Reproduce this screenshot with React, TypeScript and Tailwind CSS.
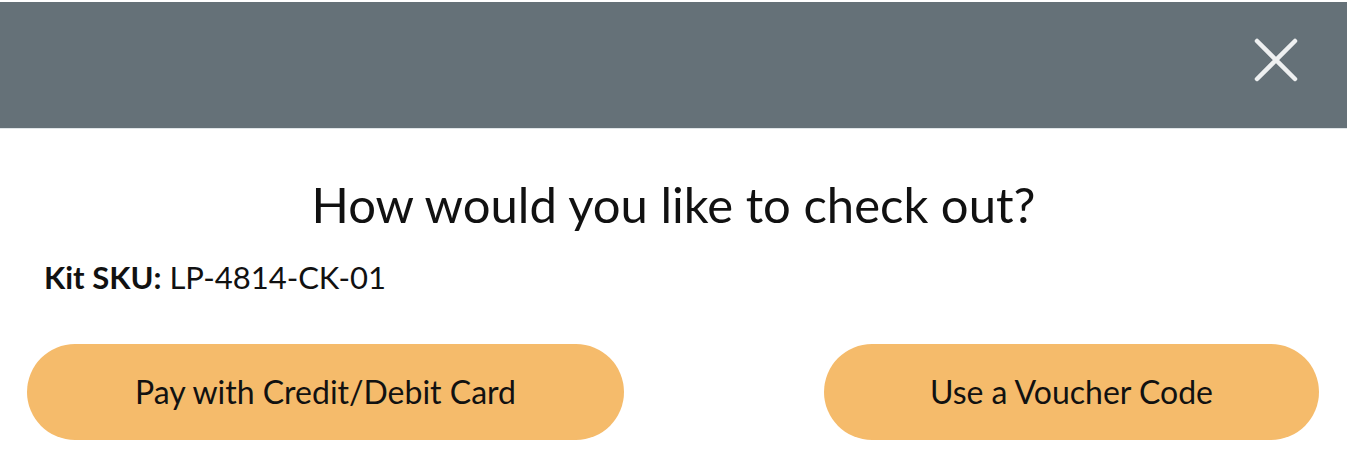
import React from "react";

export default function App() {
  return (
    <div className="w-[1347px] h-[469px] bg-white overflow-hidden" style={{ fontFamily: "Lato, 'Noto Sans', sans-serif" }}>
      <div className="mt-[2px] h-[127px] bg-[#657178] border-b border-[#dfe5e8] flex items-start justify-end pr-[48px] pt-[35px]">
        <button className="w-[46px] h-[46px] flex items-center justify-center">
          <svg width="46" height="46" viewBox="0 0 46 46">
            <path d="M4 4 L42 42 M42 4 L4 42" stroke="#eef0f1" strokeWidth="4.5" strokeLinecap="round" />
          </svg>
        </button>
      </div>
      <div className="pt-[47px] text-center text-[49px] leading-[56px] text-[#111]">How would you like to check out?</div>
      <div className="pl-[44px] pt-[27px] text-[31px] leading-[36px] text-[#111]">
        <span className="font-bold">Kit SKU:</span> LP-4814-CK-01
      </div>
      <div className="flex justify-between pl-[27px] pt-[49px] pr-[28px]">
        <button className="h-[96px] rounded-full bg-[#f5bb6b] px-[108px] text-[32px] text-[#111]">Pay with Credit/Debit Card</button>
        <button className="h-[96px] rounded-full bg-[#f5bb6b] px-[106px] text-[32px] text-[#111]">Use a Voucher Code</button>
      </div>
    </div>
  );
}
